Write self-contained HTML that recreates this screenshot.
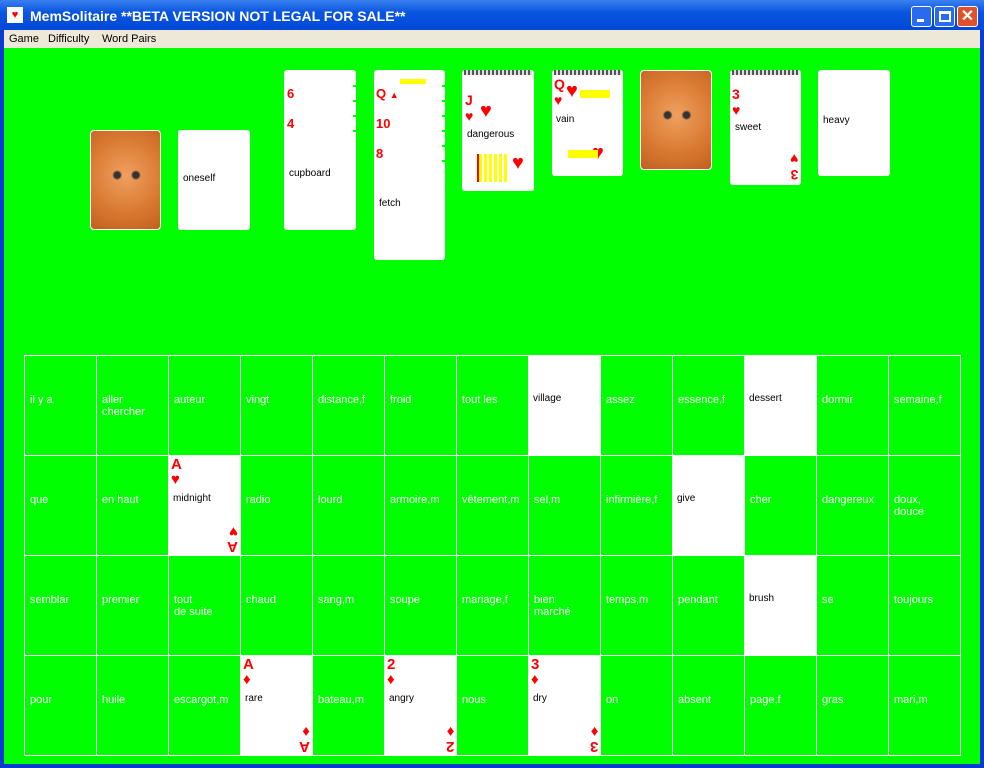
<!DOCTYPE html>
<html><head><meta charset="utf-8"><style>
*{margin:0;padding:0;box-sizing:border-box}
body{width:984px;height:768px;overflow:hidden;background:#0a3ad0;font-family:"Liberation Sans",sans-serif;position:relative}
.title{position:absolute;left:0;top:0;width:984px;height:30px;background:linear-gradient(#3a80f0,#0a56e0 40%,#0048d8);color:#fff;font-weight:bold;font-size:14px}
.title span{position:absolute;left:30px;top:8px}
.btn{position:absolute;top:6px;width:21px;height:21px;border:1px solid #fff;border-radius:3px;background:#2a6af0}
.menu{position:absolute;left:4px;top:30px;width:976px;height:18px;background:#ece9d8;font-size:11px;color:#000}
.menu span{position:absolute;top:3px}
.green{position:absolute;left:4px;top:48px;width:976px;height:716px;background:#00ff00}
.card{position:absolute;background:#fff;border-radius:3px;font-size:10px;color:#000}
.card .w{position:absolute;left:5px;top:43px}
.r{color:#f00;font-weight:bold;position:absolute;font-size:13px}
.kit{position:absolute;border-radius:4px;background:radial-gradient(circle at 38% 45%,#333 0 3px,transparent 5px),radial-gradient(circle at 65% 45%,#333 0 3px,transparent 5px),radial-gradient(circle at 50% 45%,#f0a060,#d87830 60%,#c06020);border:1px solid #fff}
.n{position:absolute;right:0;width:3px;height:2px;background:#0f0}
.strip{position:absolute;left:2px;right:2px;top:0;height:5px;background:repeating-linear-gradient(90deg,#555 0 2px,#ddd 2px 4px)}
.cell{position:absolute;width:73px;height:101px;border:1px solid #fff;color:#fff;font-size:11px}
.cell .t{position:absolute;left:5px;top:38px;line-height:12px}
</style></head><body>
<div class="title"><div style="position:absolute;left:7px;top:7px;width:16px;height:16px;background:#fff;color:#f00;font-size:11px;line-height:16px;text-align:center">♥</div><span>MemSolitaire **BETA VERSION NOT LEGAL FOR SALE**</span>
<div class="btn" style="left:911px"><div style="position:absolute;left:5px;top:12px;width:7px;height:3px;background:#fff"></div></div>
<div class="btn" style="left:934px"><div style="position:absolute;left:4px;top:4px;width:12px;height:11px;border:2px solid #fff;border-top-width:3px"></div></div>
<div class="btn" style="left:957px;background:#e0502a;color:#fff;font-size:16px;text-align:center;line-height:19px">✕</div>
</div>
<div class="menu"><span style="left:5px">Game</span><span style="left:44px">Difficulty</span><span style="left:98px">Word Pairs</span></div>
<div class="green"></div>

<div class="kit" style="left:90px;top:130px;width:71px;height:100px"></div>
<div class="card" style="left:178px;top:130px;width:72px;height:100px"><span class="w">oneself</span></div>

<div class="card" style="left:284px;top:70px;width:72px;height:160px">
<div class="n" style="top:15px"></div><div class="n" style="top:30px"></div><div class="n" style="top:45px"></div><div class="n" style="top:60px"></div>
<span class="r" style="left:3px;top:16px">6</span><span class="r" style="left:3px;top:46px">4</span><span class="w" style="top:98px">cupboard</span></div>

<div class="card" style="left:374px;top:70px;width:71px;height:190px">
<div class="n" style="top:15px"></div><div class="n" style="top:30px"></div><div class="n" style="top:45px"></div><div class="n" style="top:60px"></div><div class="n" style="top:75px"></div><div class="n" style="top:90px"></div>
<div style="position:absolute;left:26px;top:9px;width:26px;height:5px;background:#ff0"></div>
<span class="r" style="left:2px;top:16px">Q <span style="font-size:9px">▲</span></span><span class="r" style="left:2px;top:46px">10</span><span class="r" style="left:2px;top:76px">8</span><span class="w" style="top:128px">fetch</span></div>

<div class="card" style="left:462px;top:70px;width:72px;height:121px"><div class="strip"></div>
<span class="r" style="left:3px;top:22px;font-size:14px">J<br>♥</span><span class="r" style="left:18px;top:30px;font-size:20px">♥</span><span class="w" style="top:59px">dangerous</span><span class="r" style="left:50px;top:82px;font-size:20px">♥</span>
<div style="position:absolute;left:15px;top:84px;width:30px;height:28px;background:repeating-linear-gradient(90deg,#ff0 0 3px,#fff 3px 5px);border-left:2px solid #f00"></div></div>

<div class="card" style="left:552px;top:70px;width:71px;height:106px"><div class="strip"></div>
<span class="r" style="left:2px;top:6px;font-size:14px">Q<br>♥</span><span class="r" style="left:14px;top:10px;font-size:20px">♥</span><span class="w" style="left:4px;top:44px">vain</span><span class="r" style="left:40px;top:72px;font-size:20px">♥</span>
<div style="position:absolute;left:28px;top:20px;width:30px;height:8px;background:#ff0"></div><div style="position:absolute;left:16px;top:80px;width:30px;height:8px;background:#ff0"></div></div>

<div class="kit" style="left:640px;top:70px;width:72px;height:100px"></div>

<div class="card" style="left:730px;top:70px;width:71px;height:115px"><div class="strip"></div>
<span class="r" style="left:2px;top:16px;font-size:14px">3<br>♥</span><span class="w" style="top:52px">sweet</span><span class="r" style="right:3px;bottom:2px;font-size:14px;transform:rotate(180deg)">3<br>♥</span></div>

<div class="card" style="left:818px;top:70px;width:72px;height:106px"><span class="w" style="top:45px">heavy</span></div>

<div id="g"></div>
<script>
var W=[["il y a","aller<br>chercher","auteur","vingt","distance,f","froid","tout les","*village","assez","essence,f","*dessert","dormir","semaine,f"],
["que","en haut","*midnight|A|♥","radio","lourd","armoire,m","vêtement,m","sel,m","infirmière,f","*give","cher","dangereux","doux,<br>douce"],
["semblar","premier","tout<br>de suite","chaud","sang,m","soupe","mariage,f","bien<br>marché","temps,m","pendant","*brush","se","toujours"],
["pour","huile","escargot,m","*rare|A|♦","bateau,m","*angry|2|♦","nous","*dry|3|♦","on","absent","page,f","gras","mari,m"]];
var h="";
for(var r=0;r<4;r++)for(var c=0;c<13;c++){var x=24+c*72,y=355+r*100,w=W[r][c];
h+='<div class="cell" style="left:'+x+'px;top:'+y+'px">';
if(w[0]=="*"){var p=w.slice(1).split("|");
h+='<div class="card" style="left:-1px;top:-1px;width:73px;height:101px"><span class="w" style="top:38px">'+p[0]+'</span>';
if(p[1])h+='<span class="r" style="left:3px;top:2px;font-size:15px;line-height:15px">'+p[1]+'<br>'+p[2]+'</span><span class="r" style="right:3px;bottom:2px;font-size:15px;line-height:15px;transform:rotate(180deg)">'+p[1]+'<br>'+p[2]+'</span>';
h+='</div>';}else h+='<span class="t">'+w+'</span>';
h+='</div>';}
document.getElementById("g").innerHTML=h;
</script>
</body></html>
